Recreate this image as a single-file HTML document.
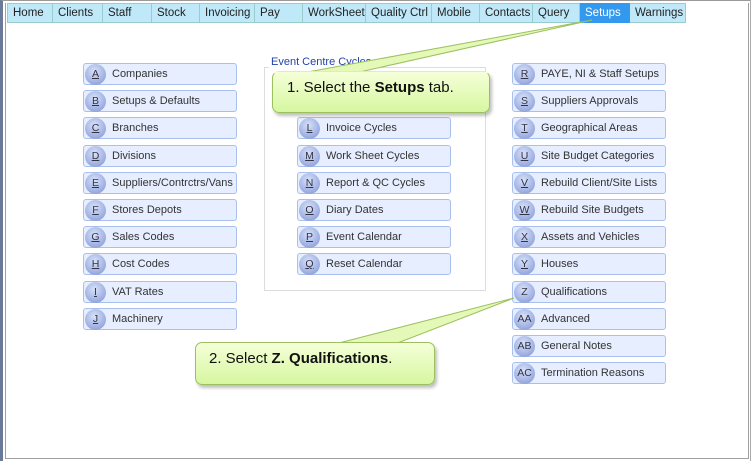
<!DOCTYPE html>
<html><head><style>
*{margin:0;padding:0;box-sizing:border-box}
body{width:751px;height:461px;background:#fff;position:relative;overflow:hidden;font-family:"Liberation Sans",sans-serif}
.frame{position:absolute;left:0;top:0;width:751px;height:461px;border-left:3px solid #6b7a99;border-top:1px solid #999;border-right:1px solid #aaa}
.inner{position:absolute;left:5px;top:3px;width:744px;height:456px;border:1px solid #a0a0a0;border-top:none}
.tabs{position:absolute;left:7px;top:3px;height:20px;display:flex}
.tab{height:20px;background:#bfe8f8;border:1px solid #9cc;border-left:none;font-size:11.5px;color:#222;padding-left:5px;line-height:19px;white-space:nowrap;overflow:hidden}
.tab:first-child{border-left:1px solid #9cc}
.tab.sel{background:#3399ee;color:#fff;border-color:#3399ee}
.btn{position:absolute;width:154px;height:22px;background:#e6eeff;border:1px solid #a9c0ef;border-radius:3px;font-size:11px;color:#333;line-height:20px;white-space:nowrap}
.btn .c{position:absolute;left:1px;top:0px;width:21px;height:21px;border-radius:50%;background:radial-gradient(circle at 45% 35%,#d8e2f8 0%,#a6b6e6 55%,#7d90cc 100%);font-size:10.5px;text-align:center;line-height:20px;color:#334}
.btn .c u{text-decoration:underline}
.btn span.t{position:absolute;left:28px;top:0}
.grp{position:absolute;left:264px;top:67px;width:222px;height:224px;border:1px solid #ddd}
.glab{position:absolute;left:269px;top:56px;background:#fff;font-size:11px;color:#2244aa;padding:0 2px}
.call{position:absolute;background:linear-gradient(#f5ffd8,#d6f7a0);border:1px solid #9cc060;border-radius:7px;box-shadow:2px 3px 3px rgba(0,0,0,.25);font-family:"Liberation Sans",sans-serif;font-size:15px;color:#111;white-space:nowrap}
</style></head><body>
<div class="frame"></div><div class="inner"></div>
<div class="tabs">
<div class="tab" style="width:46px">Home</div>
<div class="tab" style="width:50px">Clients</div>
<div class="tab" style="width:49px">Staff</div>
<div class="tab" style="width:48px">Stock</div>
<div class="tab" style="width:55px">Invoicing</div>
<div class="tab" style="width:48px">Pay</div>
<div class="tab" style="width:63px">WorkSheet</div>
<div class="tab" style="width:66px">Quality Ctrl</div>
<div class="tab" style="width:48px">Mobile</div>
<div class="tab" style="width:53px">Contacts</div>
<div class="tab" style="width:47px">Query</div>
<div class="tab sel" style="width:50px">Setups</div>
<div class="tab" style="width:56px">Warnings</div>
</div>

<div class="grp"></div><div class="glab">Event Centre Cycles</div>

<div class="btn" style="left:83px;top:63px"><div class="c"><u>A</u></div><span class="t">Companies</span></div>
<div class="btn" style="left:83px;top:90px"><div class="c"><u>B</u></div><span class="t">Setups &amp; Defaults</span></div>
<div class="btn" style="left:83px;top:117px"><div class="c"><u>C</u></div><span class="t">Branches</span></div>
<div class="btn" style="left:83px;top:145px"><div class="c"><u>D</u></div><span class="t">Divisions</span></div>
<div class="btn" style="left:83px;top:172px"><div class="c"><u>E</u></div><span class="t">Suppliers/Contrctrs/Vans</span></div>
<div class="btn" style="left:83px;top:199px"><div class="c"><u>F</u></div><span class="t">Stores Depots</span></div>
<div class="btn" style="left:83px;top:226px"><div class="c"><u>G</u></div><span class="t">Sales Codes</span></div>
<div class="btn" style="left:83px;top:253px"><div class="c"><u>H</u></div><span class="t">Cost Codes</span></div>
<div class="btn" style="left:83px;top:281px"><div class="c"><u>I</u></div><span class="t">VAT Rates</span></div>
<div class="btn" style="left:83px;top:308px"><div class="c"><u>J</u></div><span class="t">Machinery</span></div>

<div class="btn" style="left:297px;top:117px"><div class="c"><u>L</u></div><span class="t">Invoice Cycles</span></div>
<div class="btn" style="left:297px;top:145px"><div class="c"><u>M</u></div><span class="t">Work Sheet Cycles</span></div>
<div class="btn" style="left:297px;top:172px"><div class="c"><u>N</u></div><span class="t">Report &amp; QC Cycles</span></div>
<div class="btn" style="left:297px;top:199px"><div class="c"><u>O</u></div><span class="t">Diary Dates</span></div>
<div class="btn" style="left:297px;top:226px"><div class="c"><u>P</u></div><span class="t">Event Calendar</span></div>
<div class="btn" style="left:297px;top:253px"><div class="c"><u>Q</u></div><span class="t">Reset Calendar</span></div>

<div class="btn" style="left:512px;top:63px"><div class="c"><u>R</u></div><span class="t">PAYE, NI &amp; Staff Setups</span></div>
<div class="btn" style="left:512px;top:90px"><div class="c"><u>S</u></div><span class="t">Suppliers Approvals</span></div>
<div class="btn" style="left:512px;top:117px"><div class="c"><u>T</u></div><span class="t">Geographical Areas</span></div>
<div class="btn" style="left:512px;top:145px"><div class="c"><u>U</u></div><span class="t">Site Budget Categories</span></div>
<div class="btn" style="left:512px;top:172px"><div class="c"><u>V</u></div><span class="t">Rebuild Client/Site Lists</span></div>
<div class="btn" style="left:512px;top:199px"><div class="c"><u>W</u></div><span class="t">Rebuild Site Budgets</span></div>
<div class="btn" style="left:512px;top:226px"><div class="c"><u>X</u></div><span class="t">Assets and Vehicles</span></div>
<div class="btn" style="left:512px;top:253px"><div class="c"><u>Y</u></div><span class="t">Houses</span></div>
<div class="btn" style="left:512px;top:281px"><div class="c">Z</div><span class="t">Qualifications</span></div>
<div class="btn" style="left:512px;top:308px"><div class="c">AA</div><span class="t">Advanced</span></div>
<div class="btn" style="left:512px;top:335px"><div class="c">AB</div><span class="t">General Notes</span></div>
<div class="btn" style="left:512px;top:362px"><div class="c">AC</div><span class="t">Termination Reasons</span></div>

<svg style="position:absolute;left:0;top:0" width="751" height="461">
<polygon points="302,73 355,73 592,20" fill="#e4f9b8" stroke="#9cc060"/>
<polygon points="335,344 395,344 514,298" fill="#e4f9b8" stroke="#9cc060"/>
</svg>
<div class="call" style="left:272px;top:71px;width:218px;height:42px;padding:7px 0 0 14px;border-top-color:transparent">1. Select the <b>Setups</b> tab.</div>
<div class="call" style="left:195px;top:342px;width:240px;height:43px;padding:7px 0 0 13px">2. Select <b>Z. Qualifications</b>.</div>
</body></html>
